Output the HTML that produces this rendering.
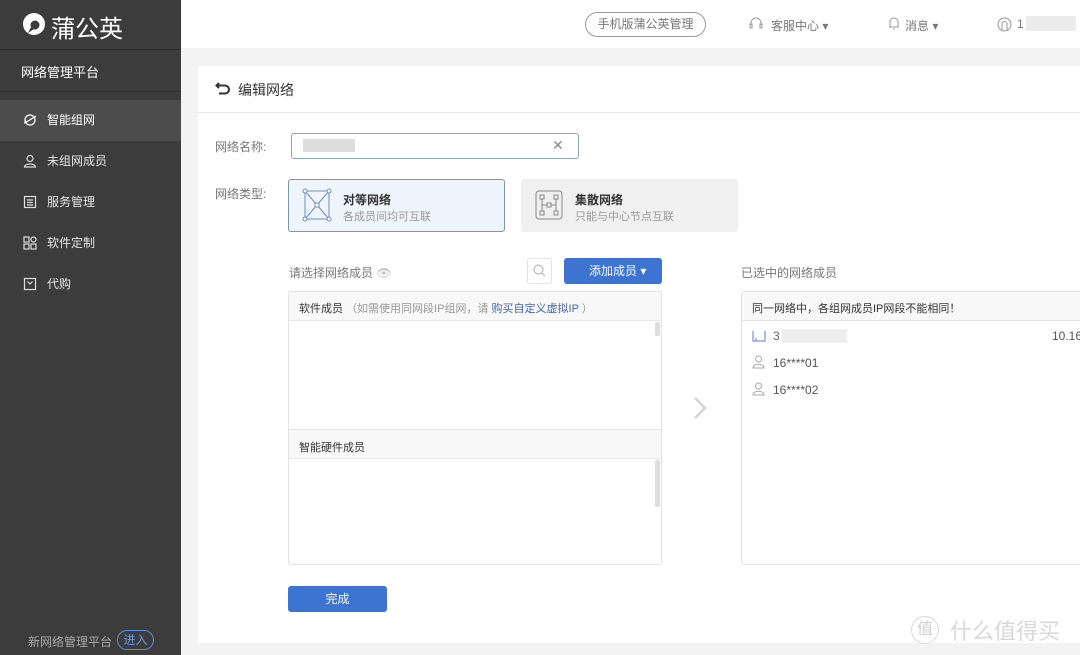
<!DOCTYPE html>
<html><head><meta charset="utf-8"><style>
*{margin:0;padding:0;box-sizing:border-box}
body{width:1080px;height:655px;overflow:hidden;background:#f3f3f3;font-family:"Liberation Sans","Noto Sans CJK SC",sans-serif;font-size:12px;color:#333;position:relative}
.a{position:absolute}
.side{left:0;top:0;width:181px;height:655px;background:#3c3c3c;color:#fff}
.nav{left:0;width:181px;height:41px;color:#e6e6e6;font-size:12px;line-height:41px;padding-left:47px}
.nav svg{position:absolute;left:23px;top:13px}
.top{left:181px;top:0;width:899px;height:48px;background:#fff}
.card{left:198px;top:66px;width:882px;height:577px;background:#fff}
.g{color:#777}
</style></head><body>
<div class="a side">
  <svg class="a" style="left:22px;top:12px" width="24" height="24" viewBox="0 0 24 24"><circle cx="12" cy="12" r="11" fill="#fff"/><circle cx="13" cy="13" r="4.5" fill="#3c3c3c"/><path d="M6 21 L9 15 L12 17Z" fill="#3c3c3c"/></svg>
  <div class="a" style="left:51px;top:9px;font-size:24px;font-weight:normal;color:#fff">蒲公英</div>
  <div class="a" style="left:0;top:49px;width:181px;height:1px;background:#2f2f2f"></div>
  <div class="a" style="left:21px;top:62px;font-size:13px;color:#fff">网络管理平台</div>
  <div class="a" style="left:0;top:91px;width:181px;height:1px;background:#2f2f2f"></div>
  <div class="a nav" style="top:100px;background:#4c4c4c;color:#fff">
    <svg width="14" height="14" viewBox="0 0 14 14" fill="none" stroke="#fff" stroke-width="1.3"><circle cx="7" cy="7" r="5"/><path d="M1 10 C4 9 10 5 13 3"/></svg>智能组网</div>
  <div class="a nav" style="top:141px"><svg width="14" height="14" viewBox="0 0 14 14" fill="none" stroke="#ddd" stroke-width="1.2"><circle cx="7" cy="4.5" r="3"/><path d="M1.5 13 C1.5 9 12.5 9 12.5 13Z"/></svg>未组网成员</div>
  <div class="a nav" style="top:182px"><svg width="14" height="14" viewBox="0 0 14 14" fill="none" stroke="#ddd" stroke-width="1.2"><rect x="1.5" y="1.5" width="11" height="11"/><path d="M4 5h6M4 7.5h6M4 10h6"/></svg>服务管理</div>
  <div class="a nav" style="top:223px"><svg width="14" height="14" viewBox="0 0 14 14" fill="none" stroke="#ddd" stroke-width="1.2"><rect x="1" y="1" width="5" height="5"/><circle cx="10.5" cy="3.5" r="2.5"/><rect x="1" y="8" width="5" height="5"/><rect x="8" y="8" width="5" height="5"/></svg>软件定制</div>
  <div class="a nav" style="top:264px"><svg width="14" height="14" viewBox="0 0 14 14" fill="none" stroke="#ddd" stroke-width="1.2"><rect x="1.5" y="1.5" width="11" height="11"/><path d="M4.5 4.5 L7 7 L9.5 4.5"/></svg>代购</div>
  <div class="a" style="left:28px;top:633px;color:#aaa;font-size:12px">新网络管理平台</div>
  <div class="a" style="left:117px;top:630px;width:37px;height:20px;border:1px solid #5b8ad8;border-radius:10px;color:#6b9ae6;font-size:12px;text-align:center;line-height:18px">进入</div>
</div>
<div class="a top">
  <div class="a" style="left:404px;top:12px;width:121px;height:25px;border:1px solid #999;border-radius:13px;text-align:center;line-height:23px;color:#777">手机版蒲公英管理</div>
  <svg class="a" style="left:568px;top:16px" width="14" height="16" viewBox="0 0 14 16" fill="none" stroke="#999" stroke-width="1"><path d="M2 9 V7 A5 5 0 0 1 12 7 V9"/><rect x="1" y="8" width="2" height="4"/><rect x="11" y="8" width="2" height="4"/></svg>
  <div class="a g" style="left:590px;top:17px">客服中心 ▾</div>
  <svg class="a" style="left:706px;top:15px" width="14" height="16" viewBox="0 0 14 16" fill="none" stroke="#999" stroke-width="1"><path d="M3 12 V7 A4 4 0 0 1 11 7 V12 H2 H12 M6 14 H8"/></svg>
  <div class="a g" style="left:724px;top:17px">消息 ▾</div>
  <svg class="a" style="left:816px;top:17px" width="15" height="15" viewBox="0 0 15 15" fill="none" stroke="#999" stroke-width="1"><circle cx="7.5" cy="7.5" r="6.5"/><path d="M5 13 V7 A2.5 2.5 0 0 1 10 7 V13"/></svg>
  <div class="a g" style="left:836px;top:17px">1</div>
  <div class="a" style="left:845px;top:16px;width:50px;height:15px;background:#ececec"></div>
</div>
<div class="a card">
  <svg class="a" style="left:17px;top:14px" width="16" height="16" viewBox="0 0 16 16" fill="none" stroke="#333" stroke-width="2"><path d="M4 3 L1.5 5.5 L4 8 M2 5.5 H10 A4 4 0 0 1 10 13.5 H4"/></svg>
  <div class="a" style="left:40px;top:14px;font-size:14px;color:#333">编辑网络</div>
  <div class="a" style="left:0;top:46px;width:882px;height:1px;background:#e8e8e8"></div>
  <div class="a g" style="left:17px;top:72px">网络名称:</div>
  <div class="a" style="left:93px;top:67px;width:288px;height:26px;border:1px solid #8fa3bd;border-radius:3px;background:#fff"></div>
  <div class="a" style="left:105px;top:73px;width:52px;height:13px;background:#ddd"></div>
  <div class="a" style="left:354px;top:71px;color:#888;font-size:14px">✕</div>
  <div class="a g" style="left:17px;top:119px">网络类型:</div>
  <div class="a" style="left:90px;top:113px;width:217px;height:53px;border:1px solid #7e93b3;border-radius:3px;background:#eff5fc"></div>
  <svg class="a" style="left:104px;top:122px" width="30" height="34" viewBox="0 0 30 34" fill="none" stroke="#6f8dbb" stroke-width="1"><rect x="3" y="3" width="24" height="28"/><path d="M3 3 L27 31 M27 3 L3 31"/><circle cx="3" cy="3" r="2" fill="#fff"/><circle cx="27" cy="3" r="2" fill="#fff"/><circle cx="3" cy="31" r="2" fill="#fff"/><circle cx="27" cy="31" r="2" fill="#fff"/><rect x="13" y="15" width="4" height="4" fill="#fff"/></svg>
  <div class="a" style="left:145px;top:125px;font-weight:bold;color:#333">对等网络</div>
  <div class="a" style="left:145px;top:142px;color:#999;font-size:11px">各成员间均可互联</div>
  <div class="a" style="left:323px;top:113px;width:217px;height:53px;background:#f0f0f0;border-radius:3px"></div>
  <svg class="a" style="left:337px;top:124px" width="28" height="30" viewBox="0 0 28 30" fill="none" stroke="#888" stroke-width="1"><rect x="1" y="1" width="26" height="28" rx="3"/><rect x="5" y="5" width="4" height="4"/><rect x="19" y="5" width="4" height="4"/><rect x="5" y="21" width="4" height="4"/><rect x="19" y="21" width="4" height="4"/><rect x="12" y="13" width="4" height="4"/><path d="M7 9 V15 H12 M21 9 V15 H16 M7 21 V15 M21 21 V15"/></svg>
  <div class="a" style="left:377px;top:125px;font-weight:bold;color:#333">集散网络</div>
  <div class="a" style="left:377px;top:142px;color:#999;font-size:11px">只能与中心节点互联</div>

  <div class="a g" style="left:91px;top:198px">请选择网络成员 <span style="color:#bbb">👁</span></div>
  <div class="a" style="left:329px;top:192px;width:25px;height:26px;border:1px solid #e3e3e3;border-radius:3px"></div>
  <svg class="a" style="left:335px;top:198px" width="13" height="13" viewBox="0 0 13 13" fill="none" stroke="#aaa"><circle cx="5.5" cy="5.5" r="4.5"/><path d="M9 9 L12 12"/></svg>
  <div class="a" style="left:366px;top:192px;width:98px;height:26px;background:#3d73d1;border-radius:3px;color:#fff;line-height:26px;padding-left:25px">添加成员 ▾</div>
  <div class="a" style="left:90px;top:225px;width:374px;height:274px;border:1px solid #e3e3e3;border-radius:3px;overflow:hidden">
    <div class="a" style="left:0;top:0;width:374px;height:29px;background:#f8f8f8;border-bottom:1px solid #e8e8e8;padding:8px 10px;font-size:11px;color:#333">软件成员 <span style="color:#999">（如需使用同网段IP组网，请 </span><span style="color:#4466aa">购买自定义虚拟IP</span><span style="color:#999"> ）</span></div>
    <div class="a" style="left:366px;top:30px;width:5px;height:14px;background:#ddd;border-radius:2px"></div>
    <div class="a" style="left:0;top:137px;width:374px;height:30px;background:#f8f8f8;border-top:1px solid #e3e3e3;border-bottom:1px solid #e8e8e8;padding:9px 10px;font-size:11px;color:#333">智能硬件成员</div>
    <div class="a" style="left:366px;top:168px;width:5px;height:47px;background:#ddd;border-radius:2px"></div>
  </div>
  <svg class="a" style="left:495px;top:330px" width="14" height="24" viewBox="0 0 14 24" fill="none" stroke="#ccc" stroke-width="2"><path d="M2 2 L12 12 L2 22"/></svg>
  <div class="a g" style="left:543px;top:198px">已选中的网络成员</div>
  <div class="a" style="left:543px;top:225px;width:345px;height:274px;border:1px solid #e3e3e3;border-radius:3px">
    <div class="a" style="left:0;top:0;width:345px;height:29px;background:#f8f8f8;border-bottom:1px solid #e3e3e3;padding:8px 10px;font-size:11px;color:#333">同一网络中，各组网成员IP网段不能相同！</div>
    <svg class="a" style="left:10px;top:38px" width="14" height="12" viewBox="0 0 14 12" fill="none" stroke="#5b7fb8"><path d="M1 1 V11 H13 V1 M4 11 V8"/></svg>
    <div class="a" style="left:31px;top:37px;color:#666">3</div>
    <div class="a" style="left:40px;top:37px;width:65px;height:14px;background:#eee"></div>
    <div class="a" style="left:310px;top:37px;color:#555">10.16</div>
    <svg class="a" style="left:10px;top:63px" width="13" height="14" viewBox="0 0 13 14" fill="none" stroke="#aaa"><circle cx="6.5" cy="4" r="3"/><path d="M1 13 C1 8 12 8 12 13Z"/></svg>
    <div class="a" style="left:31px;top:64px;color:#555">16****01</div>
    <svg class="a" style="left:10px;top:90px" width="13" height="14" viewBox="0 0 13 14" fill="none" stroke="#aaa"><circle cx="6.5" cy="4" r="3"/><path d="M1 13 C1 8 12 8 12 13Z"/></svg>
    <div class="a" style="left:31px;top:91px;color:#555">16****02</div>
  </div>
  <div class="a" style="left:90px;top:520px;width:99px;height:26px;background:#3d73d1;border-radius:3px;color:#fff;text-align:center;line-height:26px">完成</div>
  <div class="a" style="left:713px;top:550px;width:28px;height:28px;border:1px solid #d8d8d8;border-radius:50%;font-size:16px;text-align:center;line-height:26px;color:#d0d0d0">值</div>
  <div class="a" style="left:752px;top:548px;color:#d8d8d8;font-size:22px">什么值得买</div>
</div>
</body></html>
